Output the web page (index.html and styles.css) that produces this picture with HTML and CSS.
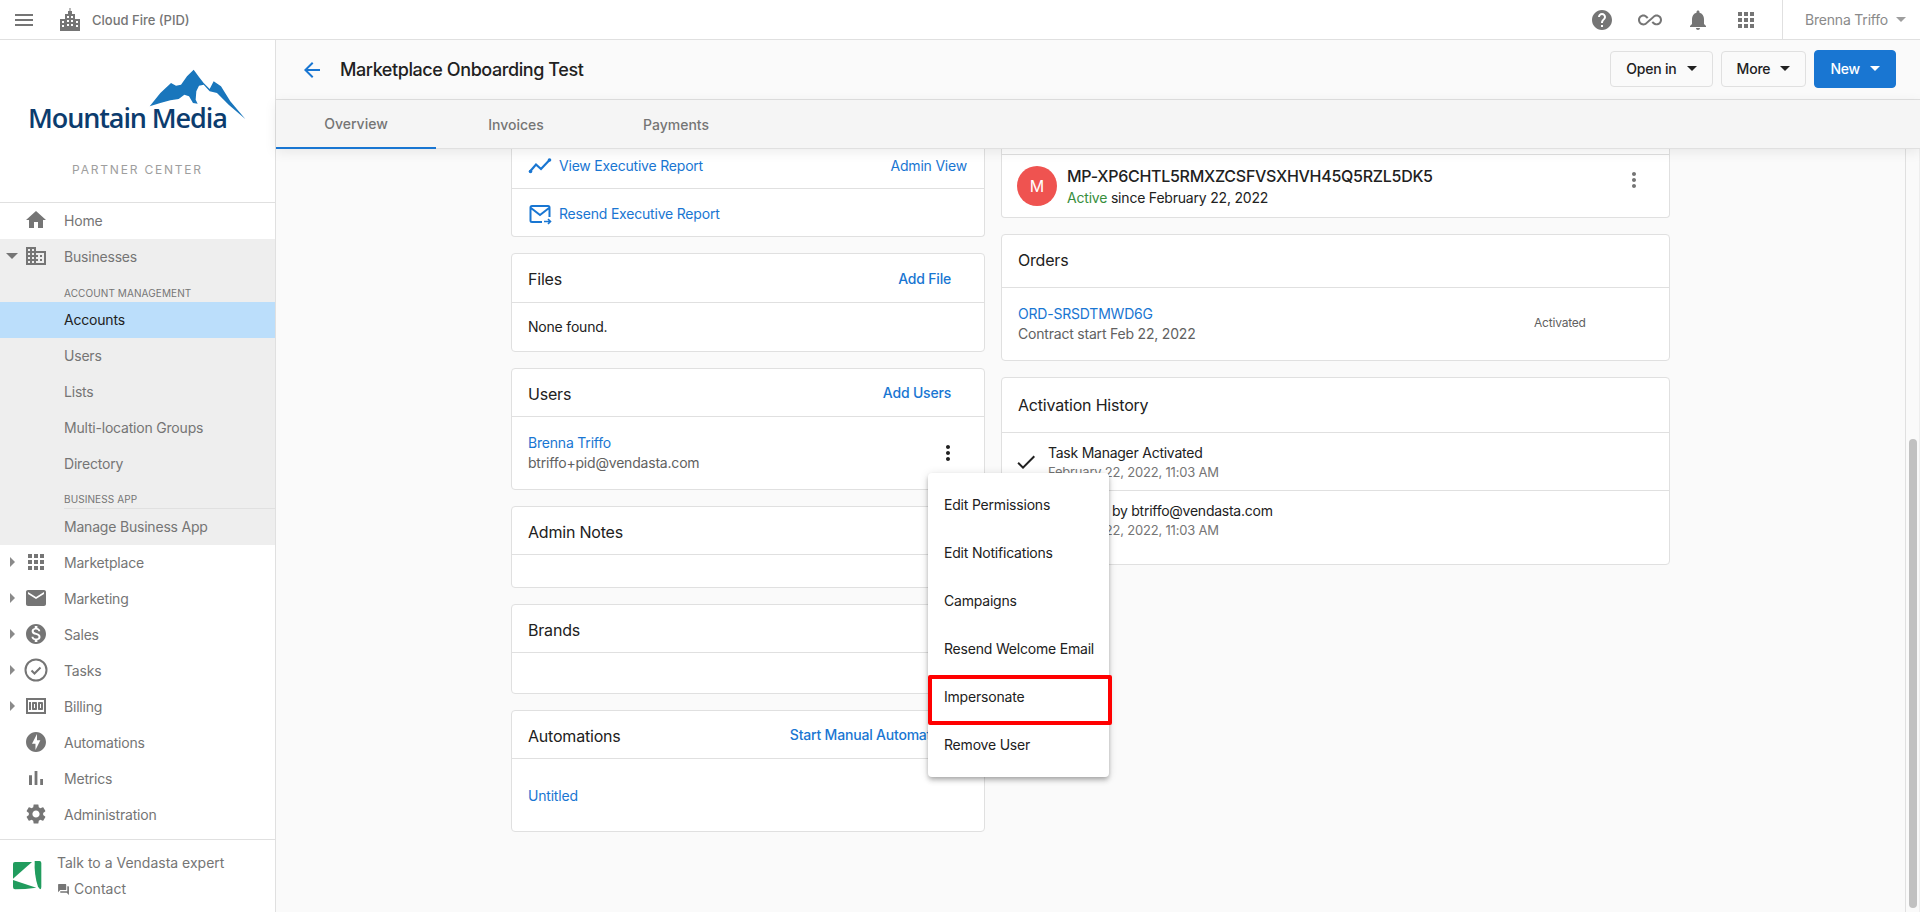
FILE: index.html
```html
<!DOCTYPE html>
<html lang="en">
<head>
<meta charset="UTF-8" />
<title>Marketplace Onboarding Test</title>
<link rel="stylesheet" href="styles.css">
</head>
<body>

<!-- TOP BAR -->
<div class="topbar">
  <svg class="ic menu-ic" viewBox="0 0 24 24"><path d="M3 18h18v-2H3v2zm0-5h18v-2H3v2zm0-7v2h18V6H3z"/></svg>
  <svg class="ic city-ic" viewBox="0 0 24 24"><path fill-rule="evenodd" d="M2 23V11h5V6h3V3h1.500V0h1v3H14v3h3v5h5v12zM4 13v2h2v-2zm0 4v2h2v-2zm5-9v2h2V8zm4 0v2h2V8zm-4 4v2h2v-2zm4 0v2h2v-2zm-4 4v2h2v-2zm4 0v2h2v-2zm5-3v2h2v-2zm0 4v2h2v-2z"/></svg>
  <span class="org-name">Cloud Fire (PID)</span>
  <div class="topbar-right">
    <span class="top-btn"><svg class="ic" viewBox="0 0 24 24"><path d="M12 2C6.480 2 2 6.480 2 12s4.480 10 10 10 10-4.480 10-10S17.520 2 12 2zm1 17h-2v-2h2v2zm2.070-7.750l-.9.920C13.450 12.900 13 13.500 13 15h-2v-.5c0-1.100.45-2.100 1.170-2.830l1.240-1.260c.37-.36.59-.86.59-1.410 0-1.100-.9-2-2-2s-2 .9-2 2H8c0-2.210 1.790-4 4-4s4 1.790 4 4c0 .88-.36 1.680-.93 2.250z"/></svg></span>
    <span class="top-btn"><svg class="ic" viewBox="0 0 24 24"><path d="M18.600 6.620c-1.440 0-2.800.56-3.770 1.530L12 10.660 10.480 12h.01L7.800 14.390c-.64.64-1.490.99-2.400.99-1.870 0-3.390-1.510-3.390-3.380S3.530 8.620 5.400 8.620c.91 0 1.760.35 2.440 1.030l1.130 1 1.510-1.340L9.220 8.200C8.200 7.180 6.840 6.620 5.400 6.620 2.420 6.620 0 9.040 0 12s2.420 5.380 5.400 5.380c1.440 0 2.800-.56 3.770-1.530l2.830-2.500.01.01L13.520 12h-.01l2.690-2.390c.64-.64 1.490-.99 2.400-.99 1.870 0 3.390 1.510 3.390 3.380s-1.520 3.380-3.390 3.380c-.9 0-1.760-.35-2.440-1.030l-1.140-1.010-1.510 1.340 1.270 1.120c1.020 1.010 2.370 1.570 3.820 1.570 2.980 0 5.400-2.410 5.400-5.380s-2.420-5.370-5.400-5.370z"/></svg></span>
    <span class="top-btn"><svg class="ic" viewBox="0 0 24 24"><path d="M12 22c1.100 0 2-.9 2-2h-4c0 1.100.89 2 2 2zm6-6v-5c0-3.070-1.640-5.640-4.500-6.320V4c0-.83-.67-1.500-1.500-1.500s-1.500.67-1.500 1.500v.68C7.630 5.360 6 7.920 6 11v5l-2 2v1h16v-1l-2-2z"/></svg></span>
    <span class="top-btn"><svg class="ic" viewBox="0 0 24 24"><path d="M4 8h4V4H4v4zm6 12h4v-4h-4v4zm-6 0h4v-4H4v4zm0-6h4v-4H4v4zm6 0h4v-4h-4v4zm6-10v4h4V4h-4zm-6 4h4V4h-4v4zm6 6h4v-4h-4v4zm0 6h4v-4h-4v4z"/></svg></span>
    <div class="user-menu">Brenna Triffo<span class="caret caret-light"></span></div>
  </div>
</div>

<div class="app-body">

  <!-- SIDEBAR -->
  <div class="sidebar">
    <div class="logo">
      <svg class="logo-peak" viewBox="410 55 300 160"><path d="M418 170L450 130 482 100 497 108 512 105 530 80 550 60 566 82 580 100 598 118 610 95 632 110 660 155 705 208 655 165 620 130 598 125 580 105 566 108 558 125 556 150 562 162 548 160 536 140 522 135 505 148 480 152 450 160Z"/></svg>
      <div class="logo-name">Mountain Media</div>
      <div class="logo-sub">PARTNER CENTER</div>
    </div>

    <div class="nav">
      <div class="nav-item">
        <span class="nav-caret"></span>
        <svg class="ic" viewBox="0 0 24 24"><path d="M10 20v-6h4v6h5v-8h3L12 3 2 12h3v8z"/></svg>
        Home
      </div>
      <div class="nav-group">
        <div class="nav-item">
          <span class="nav-caret"><span class="caret caret-nav"></span></span>
          <svg class="ic" viewBox="0 0 24 24"><path d="M12 7V3H2v18h20V7H12zM6 19H4v-2h2v2zm0-4H4v-2h2v2zm0-4H4V9h2v2zm0-4H4V5h2v2zm4 12H8v-2h2v2zm0-4H8v-2h2v2zm0-4H8V9h2v2zm0-4H8V5h2v2zm10 12h-8v-2h2v-2h-2v-2h2v-2h-2V9h8v10zm-2-8h-2v2h2v-2zm0 4h-2v2h2v-2z"/></svg>
          Businesses
        </div>
        <div class="nav-label">Account Management</div>
        <div class="nav-sub nav-sub-active">Accounts</div>
        <div class="nav-sub">Users</div>
        <div class="nav-sub">Lists</div>
        <div class="nav-sub">Multi-location Groups</div>
        <div class="nav-sub">Directory</div>
        <div class="nav-label nav-label-line">Business App</div>
        <div class="nav-sub">Manage Business App</div>
      </div>
      <div class="nav-item">
        <span class="nav-caret"><span class="caret-right"></span></span>
        <svg class="ic" viewBox="0 0 24 24"><path d="M4 8h4V4H4v4zm6 12h4v-4h-4v4zm-6 0h4v-4H4v4zm0-6h4v-4H4v4zm6 0h4v-4h-4v4zm6-10v4h4V4h-4zm-6 4h4V4h-4v4zm6 6h4v-4h-4v4zm0 6h4v-4h-4v4z"/></svg>
        Marketplace
      </div>
      <div class="nav-item">
        <span class="nav-caret"><span class="caret-right"></span></span>
        <svg class="ic" viewBox="0 0 24 24"><path d="M20 4H4c-1.100 0-1.990.9-1.990 2L2 18c0 1.100.9 2 2 2h16c1.100 0 2-.9 2-2V6c0-1.100-.9-2-2-2zm0 4l-8 5-8-5V6l8 5 8-5v2z"/></svg>
        Marketing
      </div>
      <div class="nav-item">
        <span class="nav-caret"><span class="caret-right"></span></span>
        <svg class="ic" viewBox="0 0 24 24"><path d="M12 2C6.480 2 2 6.480 2 12s4.480 10 10 10 10-4.480 10-10S17.520 2 12 2zm1.410 16.090V20h-2.670v-1.930c-1.710-.36-3.160-1.460-3.270-3.400h1.960c.1 1.050.82 1.870 2.650 1.870 1.960 0 2.400-.98 2.400-1.590 0-.83-.44-1.610-2.670-2.140-2.480-.6-4.180-1.620-4.180-3.670 0-1.720 1.390-2.840 3.110-3.210V4h2.670v1.950c1.860.45 2.790 1.860 2.850 3.390H14.300c-.05-1.110-.64-1.870-2.220-1.870-1.500 0-2.400.68-2.400 1.640 0 .84.65 1.390 2.670 1.910s4.180 1.390 4.180 3.910c-.01 1.830-1.380 2.830-3.120 3.160z"/></svg>
        Sales
      </div>
      <div class="nav-item">
        <span class="nav-caret"><span class="caret-right"></span></span>
        <svg class="ic" viewBox="0 0 24 24"><circle cx="12" cy="12" r="10.500" fill="none" stroke="currentColor" stroke-width="2"/><path d="M7.500 12.500l3 3 6-6" fill="none" stroke="currentColor" stroke-width="2"/></svg>
        Tasks
      </div>
      <div class="nav-item">
        <span class="nav-caret"><span class="caret-right"></span></span>
        <svg class="ic" viewBox="0 0 24 24"><path d="M5 8h2v8H5zm7 0H9c-.55 0-1 .45-1 1v6c0 .55.45 1 1 1h3c.55 0 1-.45 1-1V9c0-.55-.45-1-1-1zm-1 6h-1v-4h1v4zm7-6h-3c-.55 0-1 .45-1 1v6c0 .55.45 1 1 1h3c.55 0 1-.45 1-1V9c0-.55-.45-1-1-1zm-1 6h-1v-4h1v4zM2 4v16h20V4H2zm2 14V6h16v12H4z"/></svg>
        Billing
      </div>
      <div class="nav-item">
        <span class="nav-caret"></span>
        <svg class="ic" viewBox="0 0 24 24"><path d="M12 2.020c-5.510 0-9.980 4.470-9.980 9.980s4.470 9.980 9.980 9.980 9.980-4.470 9.980-9.980S17.510 2.020 12 2.020zM11.480 20v-6.260H8L13 4v6.260h3.350L11.480 20z"/></svg>
        Automations
      </div>
      <div class="nav-item">
        <span class="nav-caret"></span>
        <svg class="ic" viewBox="0 0 24 24"><path d="M5 9.200h3V19H5zM10.600 5h2.800v14h-2.800zm5.600 8H19v6h-2.800z"/></svg>
        Metrics
      </div>
      <div class="nav-item">
        <span class="nav-caret"></span>
        <svg class="ic" viewBox="0 0 24 24"><path d="M19.140 12.940c.04-.3.06-.61.06-.94 0-.32-.02-.64-.07-.94l2.030-1.580c.18-.14.23-.41.12-.61l-1.920-3.320c-.12-.22-.37-.29-.59-.22l-2.390.96c-.5-.38-1.030-.7-1.620-.94l-.36-2.540c-.04-.24-.24-.41-.48-.41h-3.840c-.24 0-.43.17-.47.41l-.36 2.540c-.59.24-1.130.57-1.620.94l-2.390-.96c-.22-.08-.47 0-.59.22L2.740 8.870c-.12.21-.08.47.12.61l2.030 1.580c-.05.3-.09.63-.09.94s.02.64.07.94l-2.030 1.580c-.18.14-.23.41-.12.61l1.920 3.320c.12.22.37.29.59.22l2.390-.96c.5.38 1.030.7 1.620.94l.36 2.540c.05.24.24.41.48.41h3.840c.24 0 .44-.17.47-.41l.36-2.540c.59-.24 1.130-.56 1.620-.94l2.390.96c.22.08.47 0 .59-.22l1.920-3.320c.12-.22.07-.47-.12-.61l-2.010-1.580zM12 15.600c-1.980 0-3.600-1.620-3.600-3.600s1.620-3.600 3.600-3.600 3.600 1.620 3.600 3.600-1.620 3.600-3.600 3.600z"/></svg>
        Administration
      </div>
    </div>

    <div class="expert">
      <svg class="expert-logo" viewBox="0 0 30 30"><path d="M2 1H19L0 17.700V3Q0 1 2 1Z"/><path d="M0 19L23.300 26.700Q12 28.300 2 28.300Q0 28.300 0 26Z"/><path d="M21.700 0H26.500Q28.300 0 28.300 2V26Q28.300 28.300 27 28.300L25 25.700Q21 14 21.700 0Z"/></svg>
      <div>
        <div class="expert-title">Talk to a Vendasta expert</div>
        <div class="expert-contact">
          <svg class="ic" viewBox="0 0 24 24"><path d="M21 6h-2v9H6v2c0 .55.45 1 1 1h11l4 4V7c0-.55-.45-1-1-1zm-4 6V3c0-.55-.45-1-1-1H3c-.55 0-1 .45-1 1v14l4-4h10c.55 0 1-.45 1-1z"/></svg>
          Contact
        </div>
      </div>
    </div>
  </div>

  <!-- MAIN -->
  <div class="main">
    <div class="page-head">
      <svg class="ic back-ic" viewBox="0 0 24 24"><path d="M20 11H7.830l5.590-5.590L12 4l-8 8 8 8 1.410-1.410L7.830 13H20v-2z"/></svg>
      <h1>Marketplace Onboarding Test</h1>
      <div class="head-actions">
        <button class="btn">Open in<span class="caret"></span></button>
        <button class="btn">More<span class="caret"></span></button>
        <button class="btn btn-primary">New<span class="caret"></span></button>
      </div>
    </div>
    <div class="tabs">
      <div class="tab tab-active">Overview</div>
      <div class="tab">Invoices</div>
      <div class="tab">Payments</div>
    </div>

    <div class="scroll-area">
      <div class="content">
        <div class="col col-left">
          <div class="card card-cut">
            <div class="row report-top">
              <svg class="ic report-ic" viewBox="0 0 24 24"><path d="M2 17.500l6-7 5 4.500 8.500-9" fill="none" stroke="currentColor" stroke-width="2.200"/><circle cx="2.500" cy="17.500" r="1.800"/><circle cx="21.500" cy="6" r="1.800"/></svg>
              <a class="link">View Executive Report</a>
              <a class="link admin-link">Admin View</a>
            </div>
            <div class="row report-bottom">
              <svg class="ic report-ic" viewBox="0 0 24 24"><path d="M14 20H4a1.500 1.500 0 0 1-1.500-1.500v-13A1.500 1.500 0 0 1 4 4h16a1.500 1.500 0 0 1 1.500 1.500V15M3 6l9 7 9-7" fill="none" stroke="currentColor" stroke-width="2"/><path d="M16 19.500h5.500M20 17l2.500 2.500L20 22" fill="none" stroke="currentColor" stroke-width="1.600"/></svg>
              <a class="link">Resend Executive Report</a>
            </div>
          </div>

          <div class="card">
            <div class="card-head files-head"><span class="head-title">Files</span><a class="head-link">Add File</a></div>
            <div class="row files-row">None found.</div>
          </div>

          <div class="card">
            <div class="card-head"><span class="head-title">Users</span><a class="head-link">Add Users</a></div>
            <div class="row user-row">
              <div>
                <a class="link">Brenna Triffo</a>
                <div class="muted">btriffo+pid@vendasta.com</div>
              </div>
              <svg class="ic dots" viewBox="0 0 24 24"><path d="M12 8c1.100 0 2-.9 2-2s-.9-2-2-2-2 .9-2 2 .9 2 2 2zm0 2c-1.100 0-2 .9-2 2s.9 2 2 2 2-.9 2-2-.9-2-2-2zm0 6c-1.100 0-2 .9-2 2s.9 2 2 2 2-.9 2-2-.9-2-2-2z"/></svg>
            </div>
            <div class="row-menu">
              <div class="menu-item">Edit Permissions</div>
              <div class="menu-item">Edit Notifications</div>
              <div class="menu-item">Campaigns</div>
              <div class="menu-item">Resend Welcome Email</div>
              <div class="menu-item">Impersonate</div>
              <div class="menu-item">Remove User</div>
              <div class="menu-mark"></div>
            </div>
          </div>

          <div class="card">
            <div class="card-head"><span class="head-title">Admin Notes</span></div>
            <div class="notes-body"></div>
          </div>

          <div class="card">
            <div class="card-head"><span class="head-title">Brands</span></div>
            <div class="brands-body"></div>
          </div>

          <div class="card">
            <div class="card-head"><span class="head-title">Automations</span><a class="head-link">Start Manual Automation</a></div>
            <div class="row auto-row"><a class="link">Untitled</a></div>
          </div>
        </div>

        <div class="col col-right">
          <div class="card card-cut">
            <div class="cut-strip"></div>
            <div class="row product-row">
              <div class="avatar">M</div>
              <div>
                <div class="product-id">MP-XP6CHTL5RMXZCSFVSXHVH45Q5RZL5DK5</div>
                <div class="product-status"><span class="active-word">Active</span> since February 22, 2022</div>
              </div>
              <svg class="ic dots dots-gray" viewBox="0 0 24 24"><path d="M12 8c1.100 0 2-.9 2-2s-.9-2-2-2-2 .9-2 2 .9 2 2 2zm0 2c-1.100 0-2 .9-2 2s.9 2 2 2 2-.9 2-2-.9-2-2-2zm0 6c-1.100 0-2 .9-2 2s.9 2 2 2 2-.9 2-2-.9-2-2-2z"/></svg>
            </div>
          </div>

          <div class="card">
            <div class="card-head orders-head">Orders</div>
            <div class="row order-row">
              <div class="order-info">
                <a class="link">ORD-SRSDTMWD6G</a>
                <div class="muted">Contract start Feb 22, 2022</div>
              </div>
              <div class="order-state">Activated</div>
            </div>
          </div>

          <div class="card">
            <div class="card-head history-head">Activation History</div>
            <div class="row history-row history-first">
              <svg class="ic check-ic" viewBox="0 0 24 24"><path d="M9 16.170L4.830 12l-1.420 1.410L9 19 21 7l-1.410-1.410z"/></svg>
              <div>
                <div class="history-title">Task Manager Activated</div>
                <div class="history-date">February 22, 2022, 11:03 AM</div>
              </div>
            </div>
            <div class="row history-row history-last">
              <svg class="ic check-ic" viewBox="0 0 24 24"><path d="M9 16.170L4.830 12l-1.420 1.410L9 19 21 7l-1.410-1.410z"/></svg>
              <div>
                <div class="history-title">Activated by btriffo@vendasta.com</div>
                <div class="history-date">February 22, 2022, 11:03 AM</div>
              </div>
            </div>
          </div>
        </div>
      </div>
      <div class="scrollbar"><div class="scroll-thumb"></div></div>
    </div>
  </div>
</div>

</body>
</html>
```

FILE: styles.css
```css
* {
  box-sizing: border-box;
}
body {
  margin: 0;
  height: 912px;
  overflow: hidden;
  font-family: Inter, "Noto Sans", sans-serif;
  font-size: 14px;
  letter-spacing: -0.2px;
  color: #212121;
  background: #fafafa;
}
.ic {
  width: 24px;
  height: 24px;
  fill: currentColor;
  flex: none;
}
.caret {
  display: inline-block;
  width: 0;
  height: 0;
  border-left: 5px solid transparent;
  border-right: 5px solid transparent;
  border-top: 5px solid currentColor;
}

/* TOP BAR */
.topbar {
  display: flex;
  align-items: center;
  height: 40px;
  background: #fff;
  border-bottom: 1px solid #e0e0e0;
  color: #757575;
}
.menu-ic {
  margin-left: 12px;
}
.city-ic {
  margin-left: 22px;
}
.org-name {
  margin-left: 10px;
  font-size: 13px;
  font-weight: 500;
  letter-spacing: 0;
}
.topbar-right {
  display: flex;
  align-items: center;
  height: 100%;
  margin-left: auto;
}
.top-btn {
  display: flex;
  justify-content: center;
  width: 48px;
}
.user-menu {
  display: flex;
  align-items: center;
  height: 100%;
  margin-left: 12px;
  padding-left: 22px;
  width: 138px;
  border-left: 1px solid #e0e0e0;
  color: #8a8a8a;
}
.caret-light {
  margin-left: 8px;
  color: #9e9e9e;
}

.app-body {
  display: flex;
  height: 872px;
}

/* SIDEBAR */
.sidebar {
  display: flex;
  flex-direction: column;
  width: 276px;
  flex: none;
  background: #fff;
  border-right: 1px solid #e0e0e0;
  color: #757575;
}
.logo {
  position: relative;
  height: 163px;
  padding: 66px 0 0 28px;
  border-bottom: 1px solid #e0e0e0;
}
.logo-peak {
  position: absolute;
  left: 146.700px;
  top: 28.300px;
  width: 100px;
  height: 53.300px;
  overflow: visible;
  fill: #1976bc;
}
.logo-name {
  font-family: "Open Sans", sans-serif;
  font-size: 27px;
  line-height: 24px;
  font-weight: 600;
  letter-spacing: -1.100px;
  color: #0c3c6e;
}
.logo-sub {
  margin: 32px 0 0 -28px;
  text-align: center;
  font-size: 12px;
  letter-spacing: 1.800px;
  color: #9e9e9e;
}
.nav {
  flex: 1;
}
.nav-item {
  display: flex;
  align-items: center;
  height: 36px;
  padding-bottom: 2px;
}
.nav-item .ic {
  margin-right: 16px;
}
.nav-caret {
  display: flex;
  justify-content: center;
  width: 24px;
}
.caret-nav {
  border-left-width: 6px;
  border-right-width: 6px;
  border-top-width: 6px;
}
.caret-right {
  width: 0;
  height: 0;
  border-top: 5px solid transparent;
  border-bottom: 5px solid transparent;
  border-left: 5px solid #8a8a8a;
}
.nav-group {
  background: #eeeeee;
}
.nav-label {
  display: flex;
  align-items: center;
  height: 27px;
  margin-left: 64px;
  padding-top: 8px;
  font-size: 10px;
  text-transform: uppercase;
  letter-spacing: 0.100px;
}
.nav-label-line {
  border-bottom: 1px solid #e0e0e0;
}
.nav-sub {
  display: flex;
  align-items: center;
  height: 36px;
  padding: 0 0 2px 64px;
}
.nav-sub-active {
  background: #bbdefb;
  color: #212121;
}
.expert {
  display: flex;
  height: 73px;
  padding: 10px 0 0 13px;
  border-top: 1px solid #e0e0e0;
  letter-spacing: 0;
}
.expert-logo {
  width: 30px;
  height: 30px;
  margin: 11px 14px 0 0;
  fill: #219c5e;
}
.expert-title {
  line-height: 26px;
}
.expert-contact {
  display: flex;
  align-items: center;
  line-height: 26px;
}
.expert-contact .ic {
  width: 13px;
  height: 13px;
  margin-right: 4px;
}

/* MAIN */
.main {
  display: flex;
  flex-direction: column;
  flex: 1;
  min-width: 0;
}
.page-head {
  display: flex;
  align-items: center;
  height: 60px;
  flex: none;
  padding: 0 24px;
  border-bottom: 1px solid #e0e0e0;
}
.back-ic {
  color: #1976d2;
}
.page-head h1 {
  margin: 0 0 0 16px;
  font-size: 18px;
  font-weight: 500;
  letter-spacing: -0.420px;
}
.head-actions {
  display: flex;
  align-items: center;
  gap: 8px;
  margin-left: auto;
  margin-bottom: 2px;
}
.btn {
  display: flex;
  align-items: center;
  gap: 10px;
  height: 36px;
  padding: 0 15px;
  background: #fafafa;
  border: 1px solid #e0e0e0;
  border-radius: 4px;
  font-family: inherit;
  font-size: 14px;
  font-weight: 500;
  letter-spacing: -0.2px;
  color: #212121;
}
.btn-primary {
  height: 38px;
  background: #1976d2;
  border-color: #1976d2;
  color: #fff;
}
.tabs {
  position: relative;
  z-index: 2;
  display: flex;
  height: 49px;
  flex: none;
  background: #f5f5f5;
  border-bottom: 1px solid #e0e0e0;
  box-shadow: 0 3px 12px rgba(0, 0, 0, 0.08);
}
.tab {
  display: flex;
  align-items: center;
  justify-content: center;
  width: 160px;
  height: 48px;
  color: #757575;
  font-weight: 500;
  letter-spacing: 0;
}
.tab-active {
  height: 49px;
  border-bottom: 2px solid #1976d2;
}
.scroll-area {
  display: flex;
  flex: 1;
  min-height: 0;
}
.content {
  display: flex;
  align-items: flex-start;
  gap: 16px;
  flex: 1;
  padding-left: 235px;
  overflow: hidden;
}
.col {
  display: flex;
  flex-direction: column;
  gap: 16px;
}
.col-left {
  width: 474px;
}
.col-right {
  width: 669px;
}
.card {
  position: relative;
  background: #fff;
  border: 1px solid #e0e0e0;
  border-radius: 4px;
}
.card-cut {
  border-top: none;
  border-radius: 0 0 4px 4px;
}
.card-head {
  display: flex;
  align-items: center;
  justify-content: space-between;
  height: 48px;
  padding: 0 33px 0 16px;
  border-bottom: 1px solid #e0e0e0;
  font-size: 16px;
}
.head-title {
  margin-top: 2px;
}
.files-head {
  height: 49px;
}
.orders-head {
  height: 53px;
  padding-bottom: 2px;
}
.history-head {
  height: 55px;
}
.head-link {
  color: #1976d2;
  font-size: 14px;
  font-weight: 500;
}
.row {
  display: flex;
  align-items: center;
  padding: 0 16px;
  line-height: 20px;
}
.link {
  color: #1976d2;
}
.muted {
  color: #616161;
}
.report-top {
  height: 40px;
  padding-right: 17px;
  padding-bottom: 6px;
  border-bottom: 1px solid #e0e0e0;
}
.report-bottom {
  height: 47px;
  padding-top: 2px;
}
.report-ic {
  margin-right: 7px;
  color: #1976d2;
}
.admin-link {
  margin-left: auto;
}
.files-row {
  height: 48px;
}
.user-row {
  justify-content: space-between;
  height: 72px;
  padding-right: 25px;
}
.dots {
  margin-right: -0.5px;
}
.notes-body {
  height: 32px;
}
.brands-body {
  height: 40px;
}
.auto-row {
  height: 72px;
  padding-top: 2px;
}

/* ROW MENU */
.row-menu {
  position: absolute;
  z-index: 3;
  top: 104px;
  left: 416px;
  width: 181px;
  padding: 8px 0;
  background: #fff;
  border-radius: 4px;
  box-shadow: 0 2px 4px -1px rgba(0, 0, 0, 0.2), 0 4px 5px rgba(0, 0, 0, 0.14), 0 1px 10px rgba(0, 0, 0, 0.12);
}
.menu-item {
  display: flex;
  align-items: center;
  height: 48px;
  padding: 0 0 2px 16px;
}
.menu-mark {
  position: absolute;
  top: 202px;
  left: 0;
  width: 184px;
  height: 50px;
  border: 4px solid #ff0000;
  border-radius: 2px;
}

/* RIGHT COLUMN */
.cut-strip {
  height: 6px;
  border-bottom: 1px solid #e0e0e0;
}
.product-row {
  height: 62px;
  padding-left: 15px;
}
.avatar {
  display: flex;
  align-items: center;
  justify-content: center;
  width: 40px;
  height: 40px;
  margin-right: 10px;
  border-radius: 50%;
  background: #ef5350;
  color: #fff;
  font-size: 16px;
}
.product-id {
  font-size: 16px;
  font-weight: 500;
  line-height: 22px;
  letter-spacing: -0.280px;
}
.product-status {
  margin-top: 1px;
  line-height: 20px;
}
.active-word {
  color: #388e3c;
}
.dots-gray {
  margin: 0 7px 12px auto;
  color: #757575;
}
.order-row {
  height: 72px;
}
.order-info {
  width: 516px;
}
.order-state {
  font-size: 12px;
  margin-bottom: 2px;
  color: #616161;
}
.history-row {
  padding-left: 12px;
}
.history-first {
  height: 58px;
  border-bottom: 1px solid #e0e0e0;
}
.history-last {
  height: 73px;
  padding-bottom: 16px;
}
.check-ic {
  margin-right: 10px;
}
.history-title {
  line-height: 20px;
  letter-spacing: -0.250px;
}
.history-date {
  font-size: 13px;
  line-height: 18px;
  color: #757575;
}

.scrollbar {
  width: 15px;
  padding: 290px 2px 4px 3px;
  background: #fafafa;
  border-left: 1px solid #e0e0e0;
  border-right: 1px solid #eeeeee;
}
.scroll-thumb {
  height: 100%;
  background: #c1c1c1;
  border-radius: 4px;
}
```
